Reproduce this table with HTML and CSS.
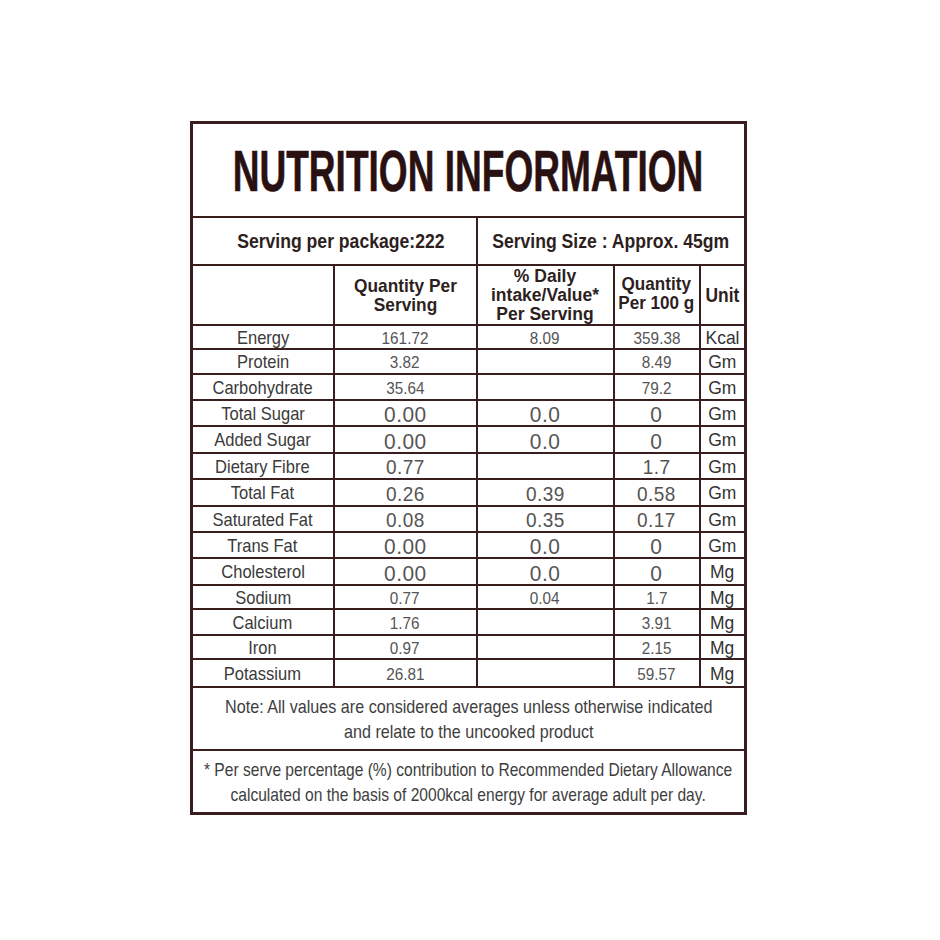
FILE: index.html
```html
<!DOCTYPE html>
<html lang="en">
<head>
<meta charset="utf-8">
<title>Nutrition Information</title>
<link rel="stylesheet" href="styles.css">
</head>
<body>
<div class="page">
<table class="nt">
<colgroup><col class="c1"><col class="c2"><col class="c3"><col class="c4"><col class="c5"></colgroup>
<tr class="title"><td colspan="5"><span class="t title-text">NUTRITION INFORMATION</span></td></tr>
<tr class="serving"><td colspan="2" class="spp"><span class="t">Serving per package:222</span></td><td colspan="3"><span class="t">Serving Size : Approx. 45gm</span></td></tr>
<tr class="head"><td></td><td class="qps"><span class="t">Quantity Per<br>Serving</span></td><td class="daily"><span class="t">% Daily<br>intake/Value*<br>Per Serving</span></td><td class="q100"><span class="t">Quantity<br>Per 100 g</span></td><td class="unit"><span class="t">Unit</span></td></tr>
<tr class="h24"><td class="lbl"><span class="t">Energy</span></td><td class="v"><span class="t">161.72</span></td><td class="v"><span class="t">8.09</span></td><td class="v"><span class="t">359.38</span></td><td class="u"><span class="t">Kcal</span></td></tr>
<tr class="h25"><td class="lbl"><span class="t">Protein</span></td><td class="v"><span class="t">3.82</span></td><td></td><td class="v"><span class="t">8.49</span></td><td class="u"><span class="t">Gm</span></td></tr>
<tr class="h26"><td class="lbl"><span class="t">Carbohydrate</span></td><td class="v"><span class="t">35.64</span></td><td></td><td class="v"><span class="t">79.2</span></td><td class="u"><span class="t">Gm</span></td></tr>
<tr class="h26"><td class="lbl"><span class="t">Total Sugar</span></td><td class="v big"><span class="t">0.00</span></td><td class="v big"><span class="t">0.0</span></td><td class="v big"><span class="t">0</span></td><td class="u"><span class="t">Gm</span></td></tr>
<tr class="h27"><td class="lbl"><span class="t">Added Sugar</span></td><td class="v big"><span class="t">0.00</span></td><td class="v big"><span class="t">0.0</span></td><td class="v big"><span class="t">0</span></td><td class="u"><span class="t">Gm</span></td></tr>
<tr class="h26"><td class="lbl"><span class="t">Dietary Fibre</span></td><td class="v mid"><span class="t">0.77</span></td><td></td><td class="v mid"><span class="t">1.7</span></td><td class="u"><span class="t">Gm</span></td></tr>
<tr class="h27"><td class="lbl"><span class="t">Total Fat</span></td><td class="v mid"><span class="t">0.26</span></td><td class="v mid"><span class="t">0.39</span></td><td class="v mid"><span class="t">0.58</span></td><td class="u"><span class="t">Gm</span></td></tr>
<tr class="h26"><td class="lbl"><span class="t">Saturated Fat</span></td><td class="v mid"><span class="t">0.08</span></td><td class="v mid"><span class="t">0.35</span></td><td class="v mid"><span class="t">0.17</span></td><td class="u"><span class="t">Gm</span></td></tr>
<tr class="h26"><td class="lbl"><span class="t">Trans Fat</span></td><td class="v big"><span class="t">0.00</span></td><td class="v big"><span class="t">0.0</span></td><td class="v big"><span class="t">0</span></td><td class="u"><span class="t">Gm</span></td></tr>
<tr class="h27"><td class="lbl"><span class="t">Cholesterol</span></td><td class="v big"><span class="t">0.00</span></td><td class="v big"><span class="t">0.0</span></td><td class="v big"><span class="t">0</span></td><td class="u"><span class="t">Mg</span></td></tr>
<tr class="h24"><td class="lbl"><span class="t">Sodium</span></td><td class="v"><span class="t">0.77</span></td><td class="v"><span class="t">0.04</span></td><td class="v"><span class="t">1.7</span></td><td class="u"><span class="t">Mg</span></td></tr>
<tr class="h26"><td class="lbl"><span class="t">Calcium</span></td><td class="v"><span class="t">1.76</span></td><td></td><td class="v"><span class="t">3.91</span></td><td class="u"><span class="t">Mg</span></td></tr>
<tr class="h24"><td class="lbl"><span class="t">Iron</span></td><td class="v"><span class="t">0.97</span></td><td></td><td class="v"><span class="t">2.15</span></td><td class="u"><span class="t">Mg</span></td></tr>
<tr class="h28"><td class="lbl"><span class="t">Potassium</span></td><td class="v"><span class="t">26.81</span></td><td></td><td class="v"><span class="t">59.57</span></td><td class="u"><span class="t">Mg</span></td></tr>
<tr class="note"><td colspan="5"><span class="t">Note: All values are considered averages unless otherwise indicated<br>and relate to the uncooked product</span></td></tr>
<tr class="note foot"><td colspan="5"><span class="t">* Per serve percentage (%) contribution to Recommended Dietary Allowance<br>calculated on the basis of 2000kcal energy for average adult per day.</span></td></tr>
</table>
</div>
</body>
</html>
```
FILE: styles.css
```css
html, body {
  margin: 0;
  padding: 0;
  background: #ffffff;
}

body {
  font-family: "Liberation Sans", Arial, sans-serif;
  color: #3c3c3c;
}

.page {
  padding: 121px 0 0 190px;
}

.nt {
  border-collapse: collapse;
  table-layout: fixed;
  width: 556px;
  border: 3px solid #3a1d1d;
}

.nt td {
  border: 2px solid #3a1d1d;
  padding: 0;
  text-align: center;
  vertical-align: middle;
  line-height: 1;
  overflow: visible;
}

/* condensed text: scaled horizontally around its centre */
.t {
  display: inline-block;
  white-space: nowrap;
  margin: 0 -120px;
  transform-origin: 50% 50%;
}

.c1 { width: 142px; }
.c2 { width: 143px; }
.c3 { width: 137px; }
.c4 { width: 86px; }
.c5 { width: 46px; }

.title td {
  height: 92px;
}

.title-text {
  font-weight: 700;
  font-size: 57px;
  color: #2a1111;
  transform: scaleX(0.65);
  margin: 0 -180px;
  padding-top: 2px;
  -webkit-text-stroke: 0.6px #2a1111;
}

.serving td {
  height: 46px;
  font-weight: 700;
  font-size: 20px;
  color: #2e1f1f;
}

.serving td.spp {
  padding-left: 13px;
}

.serving .t {
  transform: scaleX(0.88);
}

.head td {
  height: 58px;
  font-weight: 700;
  font-size: 19px;
  line-height: 19px;
  color: #2e1f1f;
}

.head .qps .t {
  transform: scaleX(0.91);
}

.head .daily {
  font-size: 17.5px;
  line-height: 19px;
}

.head .daily .t {
  transform: scaleX(1);
}

.head .q100 .t {
  transform: translateY(-2px) scaleX(0.9);
}

.head .unit {
  font-size: 20px;
}

.head .unit .t {
  transform: scaleX(0.87);
}

.h24 td { height: 22px; }
.h25 td { height: 23px; }
.h26 td { height: 24px; }
.h27 td { height: 25px; }
.h28 td { height: 26px; }

.lbl {
  font-size: 19px;
  color: #3a3a3a;
}

.lbl .t {
  transform: scaleX(0.87);
}

.v {
  font-size: 17px;
  color: #555555;
}

.v .t {
  transform: translateY(1px) scaleX(0.9);
}

.v.mid {
  font-size: 20px;
}

.v.mid .t {
  transform: translateY(1px) scaleX(0.95);
  letter-spacing: 0.5px;
}

.v.big {
  font-size: 22px;
}

.v.big .t {
  transform: translateY(2px) scaleX(0.95);
  letter-spacing: 0.5px;
}

.u {
  font-size: 19px;
  color: #333333;
}

.u .t {
  transform: scaleX(0.92);
}

.note td {
  height: 61px;
  font-size: 19px;
  line-height: 25px;
  color: #3e3e3e;
}

.note .t {
  transform: scaleX(0.85);
  margin: 0 -200px;
}

.note.foot .t {
  transform: scaleX(0.82);
}
```
